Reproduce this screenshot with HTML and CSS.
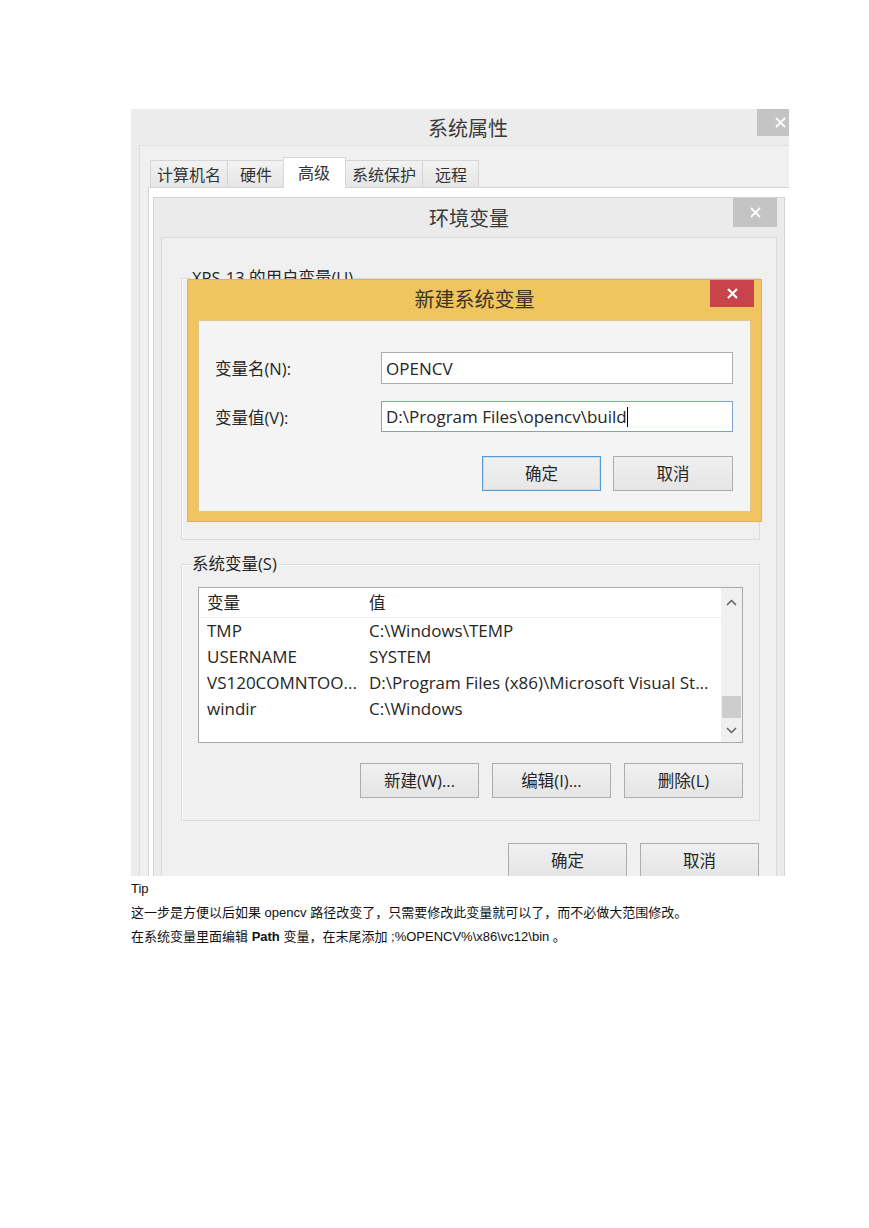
FILE: index.html
```html
<!DOCTYPE html>
<html lang="zh-CN">

<head>
    <meta charset="UTF-8">
    <meta name="viewport" content="width=device-width, initial-scale=1.0">
    <link rel="stylesheet" href="styles.css">
    <title>OpenCV 环境变量</title>
</head>

<body>
    <div class="page">
        <div class="shot">
            <!-- 系统属性 -->
            <div class="win sys">
                <div class="titlebar">
                    <span class="title">系统属性</span>
                    <span class="close gray wide">
                        <svg width="11" height="11" viewBox="0 0 11 11"><path d="M1 1L10 10M10 1L1 10" stroke="#fff" stroke-width="1.8"/></svg>
                    </span>
                </div>
                <div class="sys-client">
                    <div class="tabs">
                        <span class="tab">计算机名</span>
                        <span class="tab short">硬件</span>
                        <span class="tab current">高级</span>
                        <span class="tab">系统保护</span>
                        <span class="tab short">远程</span>
                    </div>
                    <div class="tab-panel"></div>
                </div>
            </div>

            <!-- 环境变量 -->
            <div class="win env">
                <div class="titlebar">
                    <span class="title">环境变量</span>
                    <span class="close gray">
                        <svg width="11" height="11" viewBox="0 0 11 11"><path d="M1 1L10 10M10 1L1 10" stroke="#fff" stroke-width="1.8"/></svg>
                    </span>
                </div>
                <div class="env-client">
                    <div class="group user">
                        <span class="group-label">XPS-13 的用户变量(U)</span>
                    </div>

                    <div class="group">
                        <span class="group-label">系统变量(S)</span>
                        <div class="list">
                            <div class="list-body">
                                <div class="list-row head">
                                    <span class="col-name">变量</span>
                                    <span class="col-value">值</span>
                                </div>
                                <div class="list-row">
                                    <span class="col-name">TMP</span>
                                    <span class="col-value">C:\Windows\TEMP</span>
                                </div>
                                <div class="list-row">
                                    <span class="col-name">USERNAME</span>
                                    <span class="col-value">SYSTEM</span>
                                </div>
                                <div class="list-row">
                                    <span class="col-name">VS120COMNTOO...</span>
                                    <span class="col-value">D:\Program Files (x86)\Microsoft Visual St...</span>
                                </div>
                                <div class="list-row">
                                    <span class="col-name">windir</span>
                                    <span class="col-value">C:\Windows</span>
                                </div>
                            </div>
                            <div class="scrollbar">
                                <span class="arrow up">
                                    <svg width="11" height="7" viewBox="0 0 11 7"><path d="M1 6L5.5 1.5L10 6" fill="none" stroke="#606060" stroke-width="1.5"/></svg>
                                </span>
                                <span class="track"><span class="thumb"></span></span>
                                <span class="arrow down">
                                    <svg width="11" height="7" viewBox="0 0 11 7"><path d="M1 1L5.5 5.5L10 1" fill="none" stroke="#606060" stroke-width="1.5"/></svg>
                                </span>
                            </div>
                        </div>
                        <div class="button-row">
                            <span class="btn">新建(W)...</span>
                            <span class="btn">编辑(I)...</span>
                            <span class="btn">删除(L)</span>
                        </div>
                    </div>

                    <div class="button-row bottom">
                        <span class="btn">确定</span>
                        <span class="btn">取消</span>
                    </div>
                </div>

                <!-- 新建系统变量 -->
                <div class="win newvar">
                    <div class="titlebar">
                        <span class="title">新建系统变量</span>
                        <span class="close red">
                            <svg width="11" height="11" viewBox="0 0 11 11"><path d="M1 1L10 10M10 1L1 10" stroke="#fff" stroke-width="2.2"/></svg>
                        </span>
                    </div>
                    <div class="newvar-client">
                        <div class="form">
                            <span class="form-label">变量名(N):</span>
                            <span class="input">OPENCV</span>
                            <span class="form-label">变量值(V):</span>
                            <span class="input focus">D:\Program Files\opencv\build<span class="caret"></span></span>
                        </div>
                        <div class="button-row dialog">
                            <span class="btn default">确定</span>
                            <span class="btn cancel">取消</span>
                        </div>
                    </div>
                </div>
            </div>
        </div>

        <div class="notes">
            <p>Tip</p>
            <p>这一步是方便以后如果 opencv 路径改变了，只需要修改此变量就可以了，而不必做大范围修改。</p>
            <p>在系统变量里面编辑 <b>Path</b> 变量，在末尾添加 ;%OPENCV%\x86\vc12\bin 。</p>
        </div>
    </div>
</body>

</html>
```

FILE: styles.css
```css
/* Page */
body {
    margin: 0;
    background-color: #fff;
    font-family: "Liberation Sans", "Noto Sans CJK SC", sans-serif;
}

.page {
    padding: 109px 0 0 131px;
}

/* Screenshot frame */
.shot {
    width: 658px;
    height: 767px;
    overflow: hidden;
    position: relative;
    background-color: #efefef;
    font-family: "Open Sans", "Noto Sans CJK SC", sans-serif;
    color: #262626;
}

/* Windows */
.win {
    box-sizing: border-box;
}

.titlebar {
    display: grid;
    grid-template-columns: 1fr auto 1fr;
    align-items: start;
}

.title {
    grid-column: 2;
    font-family: "Noto Sans CJK SC", sans-serif;
    font-size: 20px;
    color: #3a3a3a;
}

.close {
    grid-column: 3;
    justify-self: end;
    display: flex;
    align-items: center;
    justify-content: center;
    width: 44px;
    height: 29px;
}

.close.gray {
    background-color: #c4c4c4;
}

.close.red {
    background-color: #c8434a;
    width: 44px;
    height: 27px;
    margin: 1px 10px 0 0;
}

/* 系统属性 */
.sys {
    width: 672px;
    height: 767px;
    background-color: #ececec;
}

.sys .titlebar {
    height: 36px;
}

.sys .title {
    line-height: 38px;
    margin-left: 2px;
}

.close.wide {
    width: 46px;
    height: 27px;
}

.sys-client {
    margin: 0 8px;
    height: 731px;
    border-top: 1px solid #e1e1e1;
    border-left: 1px solid #dedede;
    background-color: #f0f0f0;
    padding-top: 14px;
    box-sizing: border-box;
}

.tabs {
    display: flex;
    align-items: flex-end;
    margin-left: 10px;
    height: 27px;
    position: relative;
    z-index: 1;
}

.tab {
    height: 27px;
    line-height: 26px;
    padding: 0 6px;
    margin-right: -1px;
    border: 1px solid #d5d5d5;
    border-bottom: none;
    background: linear-gradient(#f2f2f2, #e6e6e6);
    font-family: "Noto Sans CJK SC", sans-serif;
    font-size: 16px;
    color: #333;
    box-sizing: border-box;
}

.tab.short {
    padding: 0 11px 0 12px;
}

.tab.current {
    height: 31px;
    padding: 0 15px 0 14px;
    margin-bottom: -1px;
    background: #fff;
    line-height: 28px;
    align-self: flex-end;
}

.tab-panel {
    margin-left: 8px;
    height: 700px;
    background-color: #fff;
    border: 1px solid #d5d5d5;
}

/* 环境变量 */
.env {
    position: absolute;
    left: 22px;
    top: 88px;
    width: 632px;
    height: 700px;
    background-color: #ebebeb;
    border: 1px solid #d3d3d3;
}

.env .titlebar {
    height: 39px;
}

.env .title {
    line-height: 40px;
}

.env .close {
    margin: 0 7px 0 0;
}

.env-client {
    margin: 0 7px;
    border: 1px solid #dadada;
    background-color: #f0f0f0;
    padding: 0 16px 0 19px;
    height: 660px;
    box-sizing: border-box;
}

.group {
    border: 1px solid #dcdcdc;
    box-shadow: inset 1px 1px 0 #fafafa;
    margin-top: 24px;
    padding: 0 16px 22px;
}

.group.user {
    margin-top: 40px;
    height: 262px;
    box-sizing: border-box;
}

.group-label {
    display: block;
    width: max-content;
    height: 22px;
    line-height: 22px;
    margin: -12px 0 0 -7px;
    padding: 0 1px;
    background-color: #f0f0f0;
    font-size: 16.5px;
}

/* List view */
.list {
    display: flex;
    height: 156px;
    margin-top: 12px;
    border: 1px solid #a9a9a9;
    background-color: #fff;
    box-sizing: border-box;
}

.list-body {
    flex: 1;
}

.list-row {
    display: flex;
    height: 26px;
    line-height: 26px;
    font-size: 17px;
}

.list-row.head {
    height: 29px;
    line-height: 29px;
    font-size: 16.5px;
    border-bottom: 1px solid #ececec;
}

.col-name {
    width: 154px;
    padding-left: 8px;
    white-space: nowrap;
}

.col-value {
    padding-left: 8px;
    white-space: nowrap;
}

.scrollbar {
    width: 21px;
    display: flex;
    flex-direction: column;
    background-color: #f0f0f0;
}

.arrow {
    display: flex;
    align-items: center;
    justify-content: center;
}

.arrow.up {
    height: 28px;
}

.arrow.down {
    height: 24px;
}

.track {
    flex: 1;
    display: flex;
    align-items: flex-end;
}

.thumb {
    flex: 1;
    height: 22px;
    margin: 0 1px;
    background-color: #cdcdcd;
}

/* Buttons */
.button-row {
    display: flex;
    justify-content: flex-end;
    gap: 13px;
    margin-top: 20px;
}

.button-row.bottom {
    margin-top: 22px;
    margin-right: 1px;
}

.btn {
    width: 119px;
    height: 35px;
    line-height: 33px;
    text-align: center;
    border: 1px solid #adadad;
    background: linear-gradient(#f0f0f0, #e5e5e5);
    font-size: 16.5px;
    color: #262626;
    box-sizing: border-box;
}

/* 新建系统变量 */
.newvar {
    position: absolute;
    left: 33px;
    top: 81px;
    width: 575px;
    height: 243px;
    background-color: #f0c45e;
    border: 1px solid #e3b34c;
}

.newvar .titlebar {
    height: 40px;
}

.newvar .title {
    line-height: 38px;
    color: #3d3322;
}

.newvar-client {
    margin: 0 10px;
    border: 1px solid #e0c88c;
    background-color: #f4f4f4;
    padding: 31px 17px 20px 16px;
}

.form {
    display: grid;
    grid-template-columns: 166px 352px;
    grid-template-rows: 32px 31px;
    row-gap: 17px;
    align-items: center;
}

.form-label {
    font-size: 16.5px;
}

.input {
    height: 100%;
    display: flex;
    align-items: center;
    padding-left: 4px;
    border: 1px solid #abadb3;
    background-color: #fff;
    font-size: 17px;
    box-sizing: border-box;
}

.input.focus {
    border-color: #7da2ce;
}

.caret {
    width: 1px;
    height: 20px;
    background-color: #000;
}

.button-row.dialog {
    margin-top: 24px;
    gap: 12px;
}

.btn.default {
    border-color: #5a9bd5;
    box-shadow: inset 0 0 0 1px #c6def3;
    background: linear-gradient(#f1f1f1, #e7e7e7);
}

.btn.cancel {
    width: 120px;
}

/* Notes under the screenshot */
.notes {
    font-size: 13px;
    line-height: 24px;
    color: #111;
    padding-top: 1px;
}

.notes p {
    margin: 0;
}
```
